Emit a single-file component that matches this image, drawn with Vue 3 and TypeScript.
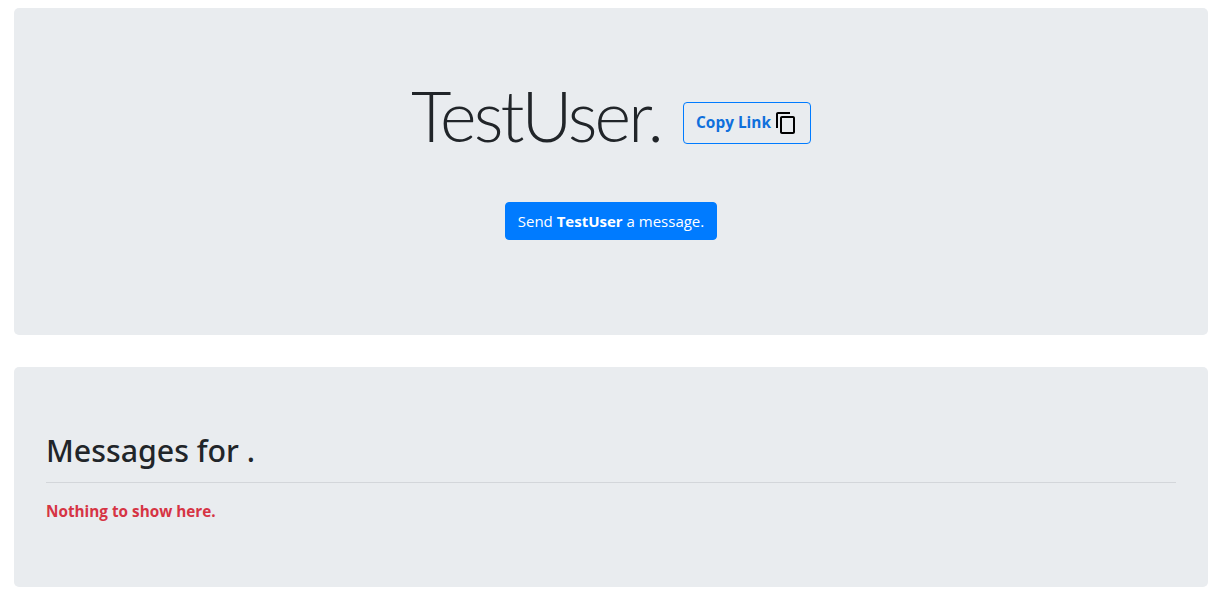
<script setup lang="ts">
const userName = 'TestUser'
</script>

<template>
  <div class="page">
    <section class="jumbotron hero">
      <div class="title-row">
        <h1 class="title">{{ userName }}.</h1>
        <button class="copy-btn" type="button">
          <span>Copy Link</span>
          <svg class="copy-icon" width="24" height="24" viewBox="0 0 24 24" fill="currentColor">
            <path d="M16 1H4c-1.1 0-2 .9-2 2v14h2V3h12V1zm3 4H8c-1.1 0-2 .9-2 2v14c0 1.1.9 2 2 2h11c1.1 0 2-.9 2-2V7c0-1.1-.9-2-2-2zm0 16H8V7h11v14z" />
          </svg>
        </button>
      </div>
      <button class="send-btn" type="button">Send <b>{{ userName }}</b> a message.</button>
    </section>

    <section class="jumbotron messages">
      <h2 class="messages-title">Messages for .</h2>
      <hr class="divider" />
      <p class="empty">Nothing to show here.</p>
    </section>
  </div>
</template>

<style scoped>
.page {
  display: flex;
  flex-direction: column;
  gap: 32px;
  padding: 8px 23px 0 14px;
  font-family: "Open Sans", "Noto Sans", sans-serif;
  color: #212529;
}
.jumbotron {
  background-color: #e9ecef;
  border-radius: 5px;
  box-sizing: border-box;
}
.hero {
  height: 327px;
  padding-top: 64px;
  display: flex;
  flex-direction: column;
  align-items: center;
}
.title-row {
  display: flex;
  align-items: center;
  gap: 22px;
  height: 86px;
}
.title {
  margin: 0;
  font-family: Lato, "Open Sans", sans-serif;
  font-size: 70px;
  font-weight: 300;
  line-height: 86px;
  letter-spacing: -2.8px;
}
.copy-btn {
  display: flex;
  align-items: center;
  gap: 3px;
  width: 128px;
  height: 42px;
  margin-top: 15px;
  padding: 0 12px;
  border: 1px solid #007bff;
  border-radius: 4px;
  background: transparent;
  color: #0f6fdc;
  font: 700 15.4px "Open Sans", "Noto Sans", sans-serif;
  white-space: nowrap;
}
.copy-icon {
  color: #000;
  flex: none;
}
.send-btn {
  margin-top: 44px;
  width: 212px;
  height: 38px;
  padding: 0;
  border: 1px solid #007bff;
  border-radius: 4px;
  background: #007bff;
  color: #fff;
  font: 400 15px "Open Sans", "Noto Sans", sans-serif;
  white-space: nowrap;
}
.messages {
  height: 220px;
  padding: 64px 32px 0;
}
.messages-title {
  margin: 0;
  font-family: "Noto Sans", "Open Sans", sans-serif;
  font-size: 30.3px;
  font-weight: 500;
  line-height: 40px;
}
.divider {
  margin: 11px 0 0;
  border: 0;
  border-top: 1px solid #d3d6da;
}
.empty {
  margin: 16px 0 0;
  font-size: 15.3px;
  font-weight: 700;
  line-height: 24px;
  color: #d63444;
}
</style>
